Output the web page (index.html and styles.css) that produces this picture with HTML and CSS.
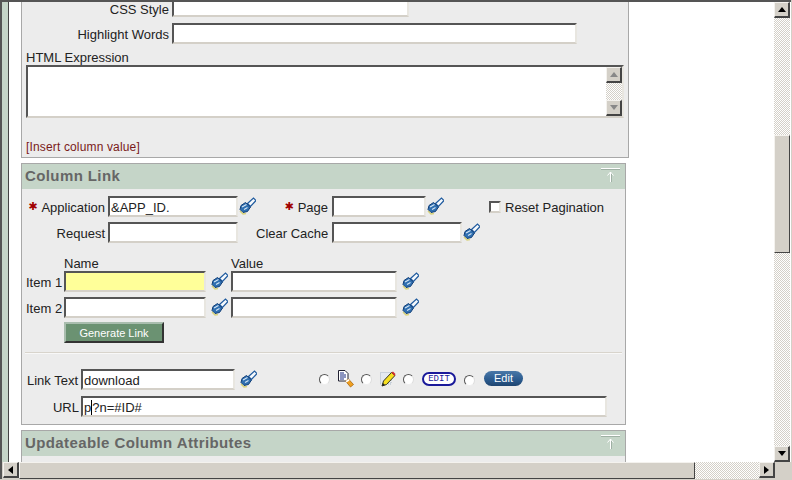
FILE: index.html
```html
<!DOCTYPE html>
<html lang="en">

<head>
    <meta charset="UTF-8">
    <meta name="viewport" content="width=device-width, initial-scale=1.0">
    <title>Column Attributes</title>
    <link rel="stylesheet" href="styles.css">
</head>

<body>
    <svg class="defs">
        <defs>
            <symbol id="torch" viewBox="0 0 17 18">
                <path d="M8.5 6.5 L14.5 1 L17 3.5 L11.5 9.5 Z" fill="#f4f8fc" stroke="#1f5a9e" stroke-width="1.2"/>
                <path d="M2 8.5 L6.5 5.5 L11.5 10 L8.5 14.5 L4 15.5 L1 12.5 Z" fill="#2f6fb0" stroke="#123f78"/>
                <path d="M3 10 L7.5 7.5 M5 12.5 L8.5 10.5" stroke="#d5e6f7" stroke-width="1.1"/>
                <path d="M1 14 L4 17 L7 16.5" fill="none" stroke="#d8d27a" stroke-width="1.4"/>
            </symbol>
            <symbol id="to-top" viewBox="0 0 19 14">
                <path d="M0 1.5H19M10.5 5V15" stroke="#9fb0a4" fill="none"/>
                <path d="M0 .5H19M9.5 4V14M6.5 7.5L9.5 4L12.5 7.5" stroke="#fff" fill="none"/>
            </symbol>
        </defs>
    </svg>

    <div class="window">
        <div class="view">
            <div class="green-strip"></div>
            <div class="page">

                <div class="panel first">
                    <div class="field-row css-row">
                        <label class="top-label">CSS Style</label>
                        <input class="input w-237" type="text">
                    </div>
                    <div class="field-row words-row">
                        <label class="top-label">Highlight Words</label>
                        <input class="input w-405" type="text">
                    </div>
                    <div class="expr-label">HTML Expression</div>
                    <div class="textarea">
                        <div class="mini-scroll">
                            <div class="btn mini-btn"><span class="arrow up grey"></span></div>
                            <div class="checker"></div>
                            <div class="btn mini-btn"><span class="arrow down grey"></span></div>
                        </div>
                    </div>
                    <div class="insert-link">[Insert column value]</div>
                </div>

                <div class="panel second">
                    <div class="panel-head">
                        <h2>Column Link</h2>
                        <svg class="top-icon"><use href="#to-top"/></svg>
                    </div>
                    <div class="panel-body">
                        <div class="link-row row-app">
                            <label class="lab lab-1"><span class="req">✱</span>Application</label>
                            <input class="input w-130" type="text" value="&amp;APP_ID.">
                            <svg class="torch"><use href="#torch"/></svg>
                            <label class="lab lab-2"><span class="req">✱</span>Page</label>
                            <input class="input w-94" type="text">
                            <svg class="torch"><use href="#torch"/></svg>
                            <span class="check"></span>
                            <span class="check-label">Reset Pagination</span>
                        </div>
                        <div class="link-row row-req">
                            <label class="lab lab-1">Request</label>
                            <input class="input w-130" type="text">
                            <span class="gap-17"></span>
                            <label class="lab lab-2">Clear Cache</label>
                            <input class="input w-130" type="text">
                            <svg class="torch"><use href="#torch"/></svg>
                        </div>
                        <div class="item-head">
                            <span class="name-head">Name</span>
                            <span>Value</span>
                        </div>
                        <div class="item-row">
                            <label class="lab lab-item">Item 1</label>
                            <input class="input w-142 yellow" type="text">
                            <svg class="torch t-item"><use href="#torch"/></svg>
                            <input class="input w-166" type="text">
                            <svg class="torch t-item"><use href="#torch"/></svg>
                        </div>
                        <div class="item-row">
                            <label class="lab lab-item">Item 2</label>
                            <input class="input w-142" type="text">
                            <svg class="torch t-item"><use href="#torch"/></svg>
                            <input class="input w-166" type="text">
                            <svg class="torch t-item"><use href="#torch"/></svg>
                        </div>
                        <button class="gen-btn">Generate Link</button>
                        <div class="rule"></div>
                        <div class="link-row row-text">
                            <label class="lab lab-3">Link Text</label>
                            <input class="input w-154" type="text" value="download">
                            <svg class="torch t-text"><use href="#torch"/></svg>
                            <span class="radio r-1"></span>
                            <svg class="pick-icon" width="16" height="18" viewBox="0 0 16 18">
                                <path d="M.5.5H7L10 3.5V11H.5Z" fill="#fff" stroke="#223"/>
                                <path d="M2 3H6M2 5H8M2 7H8M2 9H6" stroke="#1c2c80"/>
                                <path d="M7.5 11L10.5 9L15.5 14.5L12.5 17Z" fill="#f0a020" stroke="#a05a00" stroke-width=".7"/>
                                <path d="M7.5 11L10.5 9L11.5 10.5L8.5 12.5Z" fill="#fff"/>
                            </svg>
                            <span class="radio r-2"></span>
                            <svg class="pick-icon" width="16" height="16" viewBox="0 0 16 16">
                                <path d="M.5 1.5H11V13H.5Z" fill="#e4e9f0" stroke="#aab6c6" stroke-dasharray="1 1"/>
                                <path d="M3.5 10L11.5 1.5L15 4.5L6.5 13.5L2 15Z" fill="#f7e020" stroke="#332"/>
                                <path d="M11.5 1.5L13 .5L15.5 3L14.5 5Z" fill="#d03030"/>
                                <path d="M2 15L3 12L5 14Z" fill="#222"/>
                            </svg>
                            <span class="radio r-3"></span>
                            <span class="edit-outline">EDIT</span>
                            <span class="radio r-4"></span>
                            <span class="edit-pill">Edit</span>
                        </div>
                        <div class="link-row row-url">
                            <label class="lab lab-3">URL</label>
                            <div class="input url-box">p<span class="caret"></span>?n=#ID#</div>
                        </div>
                    </div>
                </div>

                <div class="panel third">
                    <div class="panel-head">
                        <h2>Updateable Column Attributes</h2>
                        <svg class="top-icon"><use href="#to-top"/></svg>
                    </div>
                </div>

            </div>
            <div class="vscroll">
                <div class="btn sb-btn"><span class="arrow up"></span></div>
                <div class="checker v-top"></div>
                <div class="thumb v-thumb"></div>
                <div class="checker grow"></div>
                <div class="btn sb-btn"><span class="arrow down"></span></div>
            </div>
        </div>
        <div class="hscroll">
            <div class="btn sb-btn"><span class="arrow left"></span></div>
            <div class="thumb h-thumb"></div>
            <div class="checker grow"></div>
            <div class="btn sb-btn"><span class="arrow right"></span></div>
            <div class="corner"></div>
        </div>
    </div>
</body>

</html>
```

FILE: styles.css
```css
* {
    box-sizing: border-box;
}

html,
body {
    margin: 0;
    height: 100%;
    overflow: hidden;
}

body {
    font-family: "Liberation Sans", Arial, sans-serif;
    font-size: 13px;
    color: #222;
    background: #d4d0c8;
}

.defs {
    display: none;
}

.window {
    width: 791px;
    height: 479px;
    border-top: 2px solid #555;
    border-left: 2px solid #555;
    display: flex;
    flex-direction: column;
}

.view {
    height: 460px;
    display: flex;
    background: #fff;
    overflow: hidden;
}

.green-strip {
    width: 7px;
    flex: none;
    background: #c5d5c8;
    border-right: 1px solid #444;
}

.page {
    flex: none;
    width: 765px;
    padding-left: 12px;
}

.panel {
    border: 1px solid #a8a8a8;
    background: #ececec;
}

.first {
    width: 608px;
    height: 156px;
    border-top: 0;
    padding-left: 4px;
}

.second {
    width: 605px;
    height: 262px;
    margin-top: 5px;
}

.third {
    width: 605px;
    height: 60px;
    margin-top: 5px;
    border-bottom: 0;
}

.input {
    display: block;
    height: 21px;
    padding: 2px 1px 0;
    border: 2px solid;
    border-color: #555 #e8e6e0 #d4d0c8 #555;
    background: #fff;
    font: 13px "Liberation Sans", Arial, sans-serif;
    color: #222;
    flex: none;
}

.w-237 { width: 237px; }
.w-405 { width: 405px; }
.w-130 { width: 130px; }
.w-94 { width: 94px; }
.w-142 { width: 142px; }
.w-166 { width: 166px; }
.w-154 { width: 154px; }

.yellow {
    background: #ffff99;
}

.field-row {
    display: flex;
    align-items: center;
}

.top-label {
    width: 146px;
    padding-right: 3px;
    text-align: right;
}

.css-row {
    height: 15px;
    align-items: flex-end;
}

.css-row .input {
    height: 21px;
    margin-top: -6px;
}

.words-row {
    margin-top: 6px;
}

.words-row .top-label {
    padding-top: 2px;
}

.expr-label {
    margin-top: 5px;
    height: 16px;
    line-height: 17px;
}

.textarea {
    width: 598px;
    height: 53px;
    display: flex;
    justify-content: flex-end;
    border: 2px solid;
    border-color: #555 #e8e6e0 #d4d0c8 #555;
    background: #fff;
}

.mini-scroll {
    width: 16px;
    display: flex;
    flex-direction: column;
}

.mini-btn {
    height: 16px;
}

.mini-scroll .checker {
    flex: 1;
}

.insert-link {
    margin-top: 22px;
    color: #7a1a1a;
    font-size: 12px;
    letter-spacing: .15px;
}

.panel-head {
    height: 25px;
    background: #c5d5c8;
    display: flex;
    align-items: center;
    justify-content: space-between;
    padding: 0 5px 0 3px;
}

.panel-head h2 {
    margin: 0;
    padding-bottom: 3px;
    font-size: 15px;
    color: #666;
    letter-spacing: .4px;
}

.top-icon {
    width: 19px;
    height: 14px;
    align-self: flex-start;
    margin-top: 4px;
}

.panel-body {
    padding: 7px 0 0 4px;
}

.link-row {
    display: flex;
    align-items: center;
    height: 21px;
}

.lab {
    text-align: right;
    padding: 2px 3px 0 0;
    white-space: nowrap;
    flex: none;
}

.lab-1 { width: 82px; }
.lab-2 { width: 76px; padding-right: 4px; }
.lab-3 { width: 55px; }
.lab-item { width: 38px; }

.row-url .lab {
    padding-right: 2px;
}

.req {
    margin-right: 4px;
    color: #a00000;
    font: 11px "DejaVu Sans", sans-serif;
    vertical-align: 2px;
}

.torch {
    width: 17px;
    height: 18px;
    margin: -2px 0 0 1px;
    flex: none;
}

.t-item {
    margin: -2px 3px 0 5px;
}

.t-text {
    margin-left: 5px;
}

.gap-17 {
    width: 18px;
    flex: none;
}

.check {
    width: 12px;
    height: 12px;
    margin-left: 45px;
    border: 2px solid;
    border-color: #555 #e8e6e0 #d4d0c8 #555;
    background: #fff;
    flex: none;
}

.check-label {
    margin-left: 4px;
    padding-top: 2px;
}

.row-req {
    margin-top: 5px;
}

.item-head {
    display: flex;
    margin-top: 12px;
    padding: 2px 0 0 38px;
    height: 16px;
    line-height: 14px;
}

.name-head {
    width: 167px;
}

.item-row {
    display: flex;
    align-items: center;
    height: 21px;
    margin-bottom: 5px;
}

.gen-btn {
    display: block;
    width: 100px;
    height: 21px;
    margin: -1px 0 0 38px;
    padding: 1px 0 0;
    border: 2px solid;
    border-color: #a9bdae #333 #333 #a9bdae;
    background: #6b9272;
    color: #fff;
    font: 11px "Liberation Sans", Arial, sans-serif;
}

.rule {
    height: 2px;
    margin: 9px 3px 0 -1px;
    background: #d8d4cc;
    border-bottom: 1px solid #f8f8f8;
}

.row-text {
    margin-top: 15px;
}

.radio {
    width: 11px;
    height: 11px;
    border-radius: 50%;
    border: 1px solid;
    border-color: #555 #ddd #eee #555;
    background: #fff;
    flex: none;
}

.r-1 { margin-left: 62px; }
.r-2 { margin-left: 7px; }
.r-3 { margin-left: 7px; }
.r-4 { margin-left: 8px; margin-top: 2px; }

.pick-icon {
    margin: -2px 0 0 8px;
    flex: none;
}

.edit-outline {
    width: 34px;
    height: 14px;
    margin: -2px 0 0 8px;
    border: 2px solid #1a1a9a;
    border-radius: 7px;
    background: #fff;
    color: #1a1a9a;
    font: 9px/10px "Liberation Mono", monospace;
    text-align: center;
    flex: none;
}

.edit-pill {
    width: 39px;
    height: 15px;
    margin: -3px 0 0 9px;
    border-radius: 8px;
    background: linear-gradient(#4a78a8, #2a5a8e 60%, #1f4570);
    color: #fff;
    font-size: 11px;
    line-height: 14px;
    text-align: center;
    flex: none;
}

.row-url {
    margin-top: 6px;
}

.url-box {
    width: 526px;
}

.caret {
    display: inline-block;
    width: 1px;
    height: 15px;
    margin-bottom: -3px;
    background: #000;
}

.btn {
    background: #d4d0c8;
    border: 1px solid;
    border-color: #f4f2ee #444 #444 #f4f2ee;
    border-width: 1px 2px 2px 1px;
    display: flex;
    align-items: center;
    justify-content: center;
    flex: none;
}

.arrow {
    width: 0;
    height: 0;
    border: 4px solid transparent;
}

.up {
    border-top: 0;
    border-bottom: 5px solid #000;
}

.down {
    border-bottom: 0;
    border-top: 5px solid #000;
}

.left {
    border-left: 0;
    border-right: 5px solid #000;
}

.right {
    border-right: 0;
    border-left: 5px solid #000;
}

.up.grey {
    border-bottom-color: #888;
}

.down.grey {
    border-top-color: #888;
}

.checker {
    background-color: #fff;
    background-image: conic-gradient(#d4d0c8 25%, #fff 0 50%, #d4d0c8 0 75%, #fff 0);
    background-size: 2px 2px;
}

.grow {
    flex: 1;
}

.vscroll {
    flex: none;
    width: 16px;
    display: flex;
    flex-direction: column;
}

.sb-btn {
    width: 16px;
    height: 16px;
}

.v-top {
    height: 117px;
}

.thumb {
    background: #d4d0c8;
    border: 1px solid;
    border-color: #f4f2ee #444 #444 #f4f2ee;
    flex: none;
}

.v-thumb {
    height: 118px;
}

.hscroll {
    height: 17px;
    display: flex;
    padding-left: 1px;
    background: #d4d0c8;
}

.h-thumb {
    width: 676px;
}

.corner {
    width: 16px;
    flex: none;
    background: #d4d0c8;
}
```
